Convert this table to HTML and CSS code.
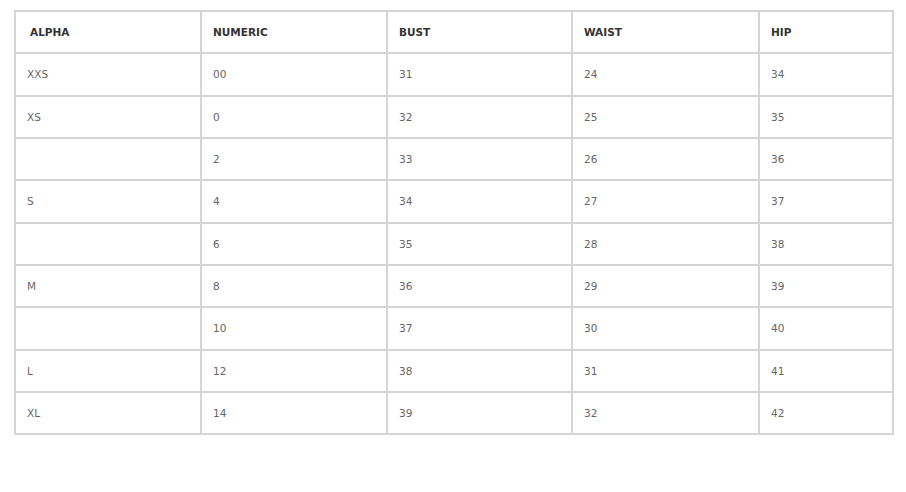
FILE: index.html
```html
<!DOCTYPE html>
<html>
<head>
<meta charset="utf-8">
<link rel="stylesheet" href="styles.css">
</head>
<body>
<table class="size-table">
  <colgroup>
    <col class="c1"><col class="c2"><col class="c3"><col class="c4"><col class="c5">
  </colgroup>
  <thead>
    <tr><th class="first">ALPHA</th><th>NUMERIC</th><th>BUST</th><th>WAIST</th><th>HIP</th></tr>
  </thead>
  <tbody>
    <tr><td>XXS</td><td>00</td><td>31</td><td>24</td><td>34</td></tr>
    <tr><td>XS</td><td>0</td><td>32</td><td>25</td><td>35</td></tr>
    <tr><td></td><td>2</td><td>33</td><td>26</td><td>36</td></tr>
    <tr><td>S</td><td>4</td><td>34</td><td>27</td><td>37</td></tr>
    <tr><td></td><td>6</td><td>35</td><td>28</td><td>38</td></tr>
    <tr><td>M</td><td>8</td><td>36</td><td>29</td><td>39</td></tr>
    <tr><td></td><td>10</td><td>37</td><td>30</td><td>40</td></tr>
    <tr><td>L</td><td>12</td><td>38</td><td>31</td><td>41</td></tr>
    <tr><td>XL</td><td>14</td><td>39</td><td>32</td><td>42</td></tr>
  </tbody>
</table>
</body>
</html>
```
FILE: styles.css
```css
html, body {
  margin: 0;
  padding: 0;
  background: #ffffff;
}
body {
  font-family: "DejaVu Sans", "Open Sans", sans-serif;
}
.size-table {
  margin: 10px 0 0 14px;
  border-collapse: separate;
  border-spacing: 0;
  border-top: 2px solid #d5d5d5;
  border-left: 2px solid #d5d5d5;
  table-layout: fixed;
  width: 880px;
}
.c1 { width: 186px; }
.c2 { width: 186px; }
.c3 { width: 185px; }
.c4 { width: 187px; }
.c5 { width: 134px; }
.size-table th,
.size-table td {
  box-sizing: border-box;
  height: 42.33px;
  padding: 0 11px;
  border-right: 2px solid #d5d5d5;
  border-bottom: 2px solid #d5d5d5;
  text-align: left;
  vertical-align: middle;
  font-size: 10.5px;
}
.size-table th {
  font-weight: bold;
  color: #333333;
}
.size-table th.first {
  padding-left: 14px;
}
.size-table td {
  color: #666666;
}
```
